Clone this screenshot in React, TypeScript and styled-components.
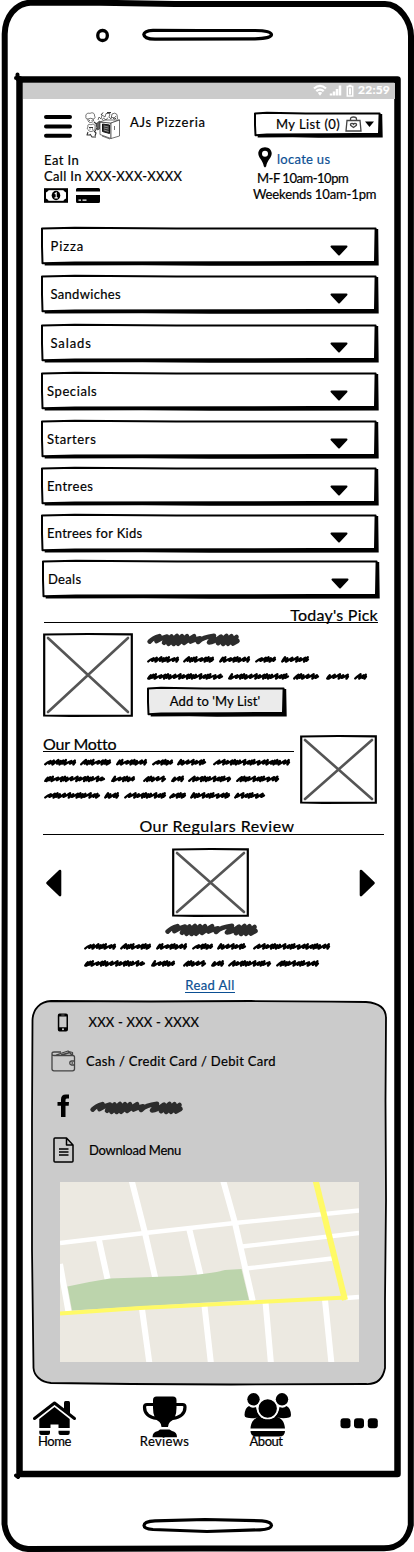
import React from "react";
import styled, { createGlobalStyle } from "styled-components";

const GlobalStyle = createGlobalStyle`
  * { box-sizing: border-box; }
  body { margin: 0; background: #fff; color: #000; font-family: "Lato", sans-serif; -webkit-text-stroke: 0.2px currentColor; }
  svg { display: block; overflow: visible; flex: none; }
`;

/* ---------- device ---------- */

const Phone = styled.div`
  position: relative;
  width: 414px;
  height: 1552px;
  padding: 83px 19px 81px 23px;
  overflow: hidden;
`;

const Bezel = styled.svg`
  position: absolute;
  inset: 0;
  pointer-events: none;
`;

const Screen = styled.div`
  position: relative;
  display: flex;
  flex-direction: column;
  height: 1388px;
`;

const StatusBar = styled.div`
  display: flex;
  align-items: center;
  justify-content: flex-end;
  gap: 4px;
  height: 16px;
  padding: 0 5px 2px 0;
  background: #cbcbcb;
  color: #fff;
`;

/* ---------- text ---------- */

const Label = styled.span<{ $track?: number; $size?: number; $lh?: number }>`
  font-size: ${(p) => p.$size ?? 13}px;
  line-height: ${(p) => p.$lh ?? 16}px;
  letter-spacing: ${(p) => p.$track ?? 0.3}px;
  white-space: nowrap;
`;

const Clock = styled(Label)`
  font-weight: 700;
`;

const Link = styled.a<{ $track?: number }>`
  font-size: 13px;
  line-height: 16px;
  letter-spacing: ${(p) => p.$track ?? 0.3}px;
  color: #0b4f93;
  text-decoration: none;
`;

const Underlined = styled(Link)`
  height: 14px;
  margin-right: 7px;
  line-height: 13px;
  border-bottom: 1px solid #0b4f93;
`;

/* ---------- header ---------- */

const Header = styled.header`
  display: flex;
  justify-content: space-between;
  height: 128px;
  padding: 13px 13px 0 21px;
`;

const Brand = styled.div`
  display: flex;
  flex-direction: column;
`;

const BrandRow = styled.div`
  display: flex;
  height: 40px;
`;

const LogoBox = styled.div`
  margin: 0 10px 0 13px;
`;

const BrandName = styled(Label)`
  margin-top: 2px;
`;

const PayRow = styled.div`
  display: flex;
  gap: 8px;
  margin-top: 4px;
`;

const Info = styled.div`
  display: flex;
  flex-direction: column;
  width: 128px;
`;

const ListButton = styled.button`
  position: relative;
  display: flex;
  align-items: center;
  width: 129px;
  height: 26px;
  padding: 0 0 2px 22px;
  border: 0;
  background: none;
  color: inherit;
  font-family: inherit;
  gap: 5px;
  -webkit-text-stroke: inherit;
`;

const LocateRow = styled.div`
  display: flex;
  gap: 5px;
  height: 23px;
  margin: 9px 0 0 4px;
`;

const LocateLink = styled(Link)`
  margin-top: 4px;
`;

const Hours = styled(Label)<{ $indent?: number }>`
  margin-left: ${(p) => p.$indent ?? 0}px;
`;

/* ---------- menu ---------- */

const Menu = styled.nav`
  display: flex;
  flex-direction: column;
  height: 378px;
  padding-left: 18px;
`;

const MenuRow = styled.button<{ $gap: number; $inset: number; $shift?: number }>`
  position: relative;
  display: flex;
  align-items: center;
  justify-content: space-between;
  flex: none;
  width: 338px;
  height: 39px;
  margin: 0 0 ${(p) => p.$gap}px ${(p) => p.$shift ?? 0}px;
  padding: 0 31px 2px ${(p) => p.$inset}px;
  border: 0;
  background: none;
  color: inherit;
  font-family: inherit;
  text-align: left;
  -webkit-text-stroke: inherit;
`;

const RowCaret = styled.svg`
  position: relative;
  top: 5px;
`;

const Frame = styled.svg`
  position: absolute;
  inset: 0;
  z-index: -1;
`;

/* ---------- sections ---------- */

const Heading = styled.h2<{ $align: string; $track: number }>`
  height: 17px;
  margin: 0;
  padding: 0;
  border-bottom: 1px solid #000;
  font-size: 16px;
  font-weight: 400;
  line-height: 17px;
  letter-spacing: ${(p) => p.$track}px;
  text-align: ${(p) => p.$align};
  white-space: nowrap;
`;

const Pick = styled.section`
  display: flex;
  flex-direction: column;
  height: 130px;
  padding: 1px 17px 0 21px;
`;

const PickBody = styled.div`
  display: flex;
  gap: 14px;
  margin: 10px 0 0 -1px;
`;

const PickText = styled.div`
  display: flex;
  flex-direction: column;
`;

const PickLines = styled.div`
  margin-top: 5px;
`;

const AddButton = styled.button`
  position: relative;
  display: flex;
  align-items: center;
  justify-content: center;
  width: 140px;
  height: 30px;
  padding: 0 4px 3px 0;
  margin-top: 2px;
  border: 0;
  background: none;
  color: inherit;
  font-family: inherit;
  -webkit-text-stroke: inherit;
`;

const Motto = styled.section`
  display: flex;
  gap: 6px;
  height: 82px;
  padding-left: 20px;
`;

const MottoText = styled.div`
  display: flex;
  flex-direction: column;
  width: 251px;
`;

const MottoLines = styled.div`
  margin: 2px 0 0 1px;
`;

const Review = styled.section`
  display: flex;
  flex-direction: column;
  height: 183px;
  padding: 0 11px 0 20px;
`;

const ReviewHeading = styled(Heading)`
  height: 18px;
  padding-left: 7px;
  line-height: 18px;
`;

const Carousel = styled.div`
  display: flex;
  align-items: center;
  justify-content: space-between;
  height: 69px;
  margin: 13px 9px 0 3px;
`;

const ReviewText = styled.div`
  display: flex;
  flex-direction: column;
  align-items: center;
  padding-top: 6px;
`;

const ReviewName = styled.div`
  margin-right: 5px;
`;

const QuoteBox = styled.div`
  align-self: flex-start;
  margin: 2px 0 7px 41px;
`;

/* ---------- contact panel ---------- */

const Panel = styled.section`
  position: relative;
  width: 356px;
  height: 386px;
  margin-left: 8px;
  padding: 3px 0 0 20px;
`;

const ContactRow = styled.div<{ $height: number }>`
  display: flex;
  align-items: center;
  height: ${(p) => p.$height}px;
`;

const IconCell = styled.div<{ $width: number }>`
  display: flex;
  width: ${(p) => p.$width}px;
  padding-right: ${(p) => p.$width - 24}px;
  justify-content: center;
`;

const SocialName = styled.div`
  margin: 4px 0 0 -1px;
`;

const MapBox = styled.div`
  margin: 11px 0 0 9px;
`;

/* ---------- bottom navigation ---------- */

const BottomNav = styled.nav`
  display: flex;
  height: 62px;
  padding: 6px 0 0 9px;
`;

const NavItem = styled.a<{ $width: number; $offset: number }>`
  display: flex;
  flex-direction: column;
  align-items: center;
  width: ${(p) => p.$width}px;
  margin-left: ${(p) => p.$offset}px;
`;

const NavIcon = styled.div`
  height: 42px;
`;

const NavLabel = styled(Label)<{ $nudge?: number }>`
  margin: -1px ${(p) => p.$nudge ?? 0}px 0 0;
`;

const MoreIcon = styled.svg`
  margin: 26px 0 0 49px;
`;

/* ---------- drawings ---------- */

const SketchBox = ({ w, h, fill = "#fff" }: { w: number; h: number; fill?: string }) => (
  <Frame width={w} height={h}>
    <path d={`M3.7 ${h - 5}L${w - 3.5} ${h - 5}L${w - 3.5} 2H${w - 0.8}L${w - 0.3} ${h - 0.6}L${w * 0.5} ${h - 0.2}L${w * 0.3} ${h - 0.7}L3.7 ${h - 0.5}Z`} />
    <path
      d={`M1 1.4L${w * 0.1} 0.8L${w * 0.4} 1.4L${w - 3.4} 1.4L${w - 4} ${h - 4.2}L${w * 0.6} ${h - 3.8}L${w * 0.1} ${h - 3.4}L1.5 ${h - 2.8}L1 ${h * 0.5}Z`}
      fill={fill}
      stroke="#000"
      strokeWidth="2"
      strokeLinejoin="round"
    />
  </Frame>
);

const ImagePlaceholder = ({ w, h }: { w: number; h: number }) => (
  <svg width={w} height={h}>
    <path d={`M1.2 1.5L${w * 0.5} 1L${w - 1.2} 1.3L${w - 1.2} ${h - 1.3}L${w * 0.3} ${h - 1.2}L1.2 ${h - 1.5}Z`} fill="#fff" stroke="#000" strokeWidth="2.2" />
    <path d={`M5 5L${w - 5} ${h - 5}M${w - 5} 5L5 ${h - 5}`} stroke="#555" strokeWidth="2.6" strokeLinecap="round" />
  </svg>
);

type Word = [number, number];

const STEPS = [5.2, 3.2, 4.6, 2.5, 2.4, 2.6, 5.4, 4.1, 2.6, 2.4, 5];

const wordPath = ([from, to]: Word, y: number, seed: number) => {
  let x = from + 1.2;
  let i = seed;
  let d = `M${x} ${y + 2}`;
  while (x < to - 3) {
    const s = STEPS[i % STEPS.length];
    const next = Math.min(x + s, to - 1.4);
    const top = y - 1.3 - (i % 3) * 0.5;
    const low = y + 1.4 + (i % 2) * 0.8;
    d += `Q${(x + s * 0.4).toFixed(1)} ${y.toFixed(1)} ${(next + 0.2).toFixed(1)} ${top.toFixed(1)}L${(next - 1.2).toFixed(1)} ${low.toFixed(1)}`;
    x = next;
    i += 1;
  }
  return `${d}L${to - 1} ${y}`;
};

const ScribbleLines = ({ lines, width, pitch }: { lines: Word[][]; width: number; pitch: number }) => (
  <svg width={width} height={pitch * lines.length}>
    <g fill="none" stroke="#000" strokeWidth="2.3" strokeLinecap="round" strokeLinejoin="round">
      {lines.map((words, row) => words.map((word, i) => <path key={`${row}-${i}`} d={wordPath(word, row * pitch + pitch / 2, row * 3 + i * 2)} />))}
    </g>
  </svg>
);

const ScribbleTitle = () => (
  <svg width="93" height="13" viewBox="0 0 93 13">
    <path
      d="M2.6 8.6Q6 5 12.500 3.200L9.500 8.200Q14 5 20 3.600L17 9.800L24.500 3.400L21.500 10.800L30 3L26.500 11L35 3.200L31 10.800L40 3.200L37 10Q42 6 47 3.200L43.500 8.600Q48 6 53 5.200L51 9Q56 4 67 2.800L62 9.500Q67 9 74 3.600L71 10.200L79.500 3L76 11L84.500 3.200L81 10.800L89.500 4L86 10.600L90.500 8"
      fill="none"
      stroke="#2c2c2c"
      strokeWidth="4.6"
      strokeLinecap="round"
      strokeLinejoin="round"
    />
  </svg>
);

const Arrow = ({ flip }: { flip?: boolean }) => (
  <svg width="16" height="28" viewBox="0 0 16 28">
    <path d={flip ? "M2 2L14.500 14L2 26Z" : "M14 2L1.500 14L14 26Z"} stroke="#000" strokeWidth="2.6" strokeLinejoin="round" />
  </svg>
);

const PizzeriaLogo = () => (
  <svg width="35" height="27" viewBox="0 0 35 27" fill="none" stroke="#333" strokeWidth="0.700" strokeLinejoin="round">
    <path d="M1 5C0 2 3 0.500 5 1.500C7 0 10 1 9.500 4C11 6 9 7 8 7L8.500 9C7 11 4 11 3 9L3 7C1 7 0.500 6 1 5Z" />
    <path d="M3 7Q6 5.500 8 7M4 8.500H5M6.500 8.500H7.500" />
    <path d="M3 15C2 12 5 12 6 13C8 11 11 13 10 15C11 17 9 17.500 8.500 18C8 20 4 20 3.500 18C2 17 2 16 3 15Z" />
    <path d="M4 15.500H8M4.500 17H5.500M7 17H8M3 20L2 23H5M9 19L11 21L10 24M5 22L7 25H11M9 10L14 14M11 11L13 17M12 16L10 19" strokeWidth="1.1" />
    <path d="M11 12L14.500 9V17L12.500 18Z" fill="#666" />
    <path d="M15 10L26 11V26.500L15 22.500Z" fill="#fff" />
    <path d="M15 10L20 8H34.500L26 11Z" fill="#fff" />
    <path d="M26 11L34.500 8V24L26 26.500Z" fill="#fff" />
    <path d="M17.500 12L24.500 13V21.500L17.500 19.500Z" fill="#333" stroke="#111" strokeWidth="1" />
    <path d="M19 14L23.500 15M19 16L23.500 17M19 18L23.500 19.500" stroke="#ccc" strokeWidth="0.600" />
    <path d="M13 8L14 5L16 7L17 3L20 5L21 1.500H25L24 5L26 7L27 2Q30 0 32 2.500L32.500 7M17 8L18.500 6L21 8L23 5.500M26 5L29 6L31 4" />
    <path d="M16 3L18 0.500M22 0.500H26M28 6Q30 8 31 6" strokeWidth="1" />
    <path d="M29.500 14V18M17 24L25 27" />
  </svg>
);

const CashIcon = () => (
  <svg width="24" height="15" viewBox="0 0 24 15">
    <rect x="1" y="1.200" width="22" height="12.600" fill="#fff" stroke="#000" strokeWidth="2" />
    <path d="M1 1H5Q4.500 4 2 4.500H1ZM23 1H19Q19.500 4 22 4.500H23ZM1 14H5Q4.500 11 2 10.500H1ZM23 14H19Q19.500 11 22 10.500H23Z" />
    <ellipse cx="12" cy="7.500" rx="4.300" ry="4.700" />
    <path d="M10.700 6L12.200 4.800V9.500M10.500 9.900H13.800" stroke="#fff" strokeWidth="1.100" fill="none" />
  </svg>
);

const CardIcon = () => (
  <svg width="24" height="15" viewBox="0 0 24 15">
    <path d="M1.500 0H22.500Q24 0 24 1.500V3.600H0V1.500Q0 0 1.500 0ZM0 7H24V13.500Q24 15 22.500 15H1.500Q0 15 0 13.500Z" />
    <path d="M2.500 12.200H5M6.500 12.200H10.500" stroke="#fff" strokeWidth="1.200" />
  </svg>
);

const BagIcon = () => (
  <svg width="17" height="16" viewBox="0 0 17 16" fill="none" stroke="#444" strokeWidth="1.300">
    <path d="M2 4.500H15L16 15H1Z" />
    <path d="M5.500 4.500V3Q5.500 1 8.500 1Q11.500 1 11.500 3V4.500" />
    <path d="M8.500 11.500L5.600 9.300Q5 7.300 7 7.300Q8 7.400 8.500 8.200Q9 7.400 10 7.300Q12 7.300 11.400 9.300Z" />
  </svg>
);

const PinIcon = () => (
  <svg width="14" height="21" viewBox="0 0 14 21">
    <path fillRule="evenodd" d="M7 0.200C3 0.200 0.300 3 0.300 6.600C0.300 11 5 13.500 5.800 19.300Q7 21.500 8.200 19.300C9 13.500 13.700 11 13.700 6.600C13.700 3 11 0.200 7 0.200ZM7 3.700A3 3 0 1 1 7 9.700A3 3 0 1 1 7 3.700Z" />
  </svg>
);

const HomeIcon = () => (
  <svg width="43" height="36" viewBox="0 0 43 36">
    <path d="M31 2.500Q31 1 32.500 1H35.500Q37 1 37 2.500V14L31 9Z" />
    <path d="M1.500 18.500L21.500 3L41.500 18.500" fill="none" stroke="#000" strokeWidth="3" strokeLinecap="round" strokeLinejoin="round" />
    <path d="M6.300 19L21.500 7L36.700 19V28H25.500V24.500H17.500V28H6.300ZM6.300 30.800H17V33Q17 35 15 35H8.300Q6.300 35 6.300 33ZM25.500 30.800H36.700V33Q36.700 35 34.700 35H27.500Q25.500 35 25.500 33Z" />
  </svg>
);

const TrophyIcon = () => (
  <svg width="46" height="42" viewBox="0 0 46 42">
    <path d="M11 4Q11 0.500 14.500 0.500H31Q34.500 0.500 34.500 4V12Q34.500 23 28 26Q26 28 26 31H19.500Q19.500 28 17.500 26Q11 23 11 12Z" />
    <path d="M12 8.500H5Q2.500 8.500 2.500 11C2.500 18 8 21.500 15 22.500M33.500 8.500H40.500Q43 8.500 43 11C43 18 37.500 21.500 30.500 22.500" fill="none" stroke="#000" strokeWidth="3.200" />
    <path d="M10.500 41.200Q10.500 36 16 35L18 33.500H27.500L30 35Q35 36 35 41.200Z" />
  </svg>
);

const PeopleIcon = () => (
  <svg width="47" height="44" viewBox="0 0 47 44">
    <g transform="translate(0 1)">
      <circle cx="9.500" cy="6.300" r="6.200" />
      <circle cx="38" cy="6.300" r="6.200" />
      <path d="M0.500 22Q1 14.500 5 13Q8 16 12 14Q13 21 17.500 24Q8 26 2.500 24.500Q0.500 24 0.500 22ZM47 22Q46.500 14.500 42.500 13Q39.500 16 35.500 14Q34.500 21 30 24Q39 26 45 24.500Q47 24 47 22Z" />
      <path d="M6.500 35.500C7 28 11 25 15.500 23.500Q23.500 28.500 32 23.500C37 25 40.500 28 41 35.500ZM6.500 38H41Q41 43.500 35 43.500H12.500Q6.500 43.500 6.500 38Z" />
      <circle cx="23.700" cy="15.500" r="10" stroke="#fff" strokeWidth="1.600" />
    </g>
  </svg>
);

const SmartphoneIcon = () => (
  <svg width="12" height="19" viewBox="0 0 12 19">
    <path fillRule="evenodd" d="M2.500 0.500H9Q11 0.500 11 2.500V16.500Q11 18.500 9 18.500H2.500Q0.800 18.500 0.800 16.500V2.500Q0.800 0.500 2.500 0.500ZM2.300 3.500V14.200H9.500V3.500ZM4.300 1.700V2.300H7.500V1.700ZM6 15.200A1 1 0 1 0 6 17.300A1 1 0 1 0 6 15.200Z" />
  </svg>
);

const WalletIcon = () => (
  <svg width="25" height="22" viewBox="0 0 25 22" fill="none" stroke="#444" strokeWidth="1.300" strokeLinejoin="round">
    <path d="M22.500 5.500H3Q1 5.500 1 3.500M1 3.500V19Q1 20.800 3 20.800H21.500Q23.500 20.800 23.500 19V7Q23.500 5.500 22 5.500M1 3.500Q1 2 3 2H10M5 5L17 1L21 5M10 5L19 2.500M18 1.500L21.500 2.500V5" />
    <path d="M23.500 11H20.500Q18.700 11.200 18.700 13Q18.700 14.800 20.500 15H23.500M20.500 13H22" />
  </svg>
);

const FacebookIcon = () => (
  <svg width="13" height="23" viewBox="0 0 13 23">
    <path d="M12 0.500V4.500H9.800Q8.500 4.500 8.500 6V8H12L11.700 11.800H8.500V23H4V11.800H0.500V8H4V5.500Q4 0.500 8.800 0.500Z" />
  </svg>
);

const DocumentIcon = () => (
  <svg width="21" height="26" viewBox="0 0 21 26" fill="none" stroke="#000" strokeWidth="1.500" strokeLinejoin="round">
    <path d="M1 2Q1 1 2 1H13.500L20 8V24Q20 25 19 25H2Q1 25 1 24ZM13.500 1V8H20" />
    <path d="M6 12H15.500M6 15H15.500M6 18H15.500" strokeWidth="1.300" />
  </svg>
);

const StreetMap = () => (
  <svg width="299" height="180" viewBox="0 0 299 180" style={{ overflow: "hidden" }}>
    <rect width="299" height="180" fill="#ece9e1" />
    <g fill="none" stroke="#fff" strokeWidth="4.300">
      <path d="M0 61L85 51L175 41L299 28.500M182 64.500L299 51M186 86.500L272 76.500M286 116L299 115" />
    </g>
    <g fill="none" stroke="#fff" strokeWidth="6">
      <path d="M71.500 -2L85 51L95.500 97M163 -2L175 41L193 120M38.500 56L48 99M129 46L141 95M0 82L8.500 130M82 127L89.500 182M144.500 124L151 182M205.500 120L211 182M265 118L271.500 182" />
    </g>
    <path d="M7.500 104.500Q30 99.500 50 96.500L120 94Q150 92 165 88L181.500 87L189 118L12 128.500Z" fill="#bcd4ac" />
    <path d="M0 131.500L80 126L189 120.500L286 115.500" fill="none" stroke="#fffa66" strokeWidth="4" />
    <path d="M255.500 -2L285 118" fill="none" stroke="#fffa66" strokeWidth="6" />
  </svg>
);

const DeviceOutline = () => (
  <Bezel width="414" height="1552">
    <g fill="none" stroke="#000" strokeLinejoin="round">
      <path d="M32 2.500L100 2.700L175 4H385C400 4 411 22 411 36L410.700 500L411 1000L410.800 1525C408 1540 398 1548 384 1548.300L200 1548.500L28 1549C14 1548 6 1537 4.500 1524L4.500 1000L5.200 500L4.700 34C5 17 15 3 32 2.500Z" strokeWidth="6" />
      <path d="M19.500 79.500H397.500V1474H19.500Z" strokeWidth="6.500" />
      <path d="M17.500 74.500V79M16 78H20M16 1475.500L18 1477" strokeWidth="4" strokeLinecap="round" />
      <rect x="97.800" y="30.500" width="9.500" height="10" rx="4.500" strokeWidth="3.300" />
      <path d="M153 30.300L200 30.500H255C265 30.500 271 32 271.500 34.500C271.500 37 265 38.800 255 38.800L155 39.200C147 39 144 37 143.800 34.500C144 32 148 30.600 153 30.300Z" strokeWidth="3.200" />
      <path d="M155 1520.800L205 1519.500L262 1520.800C269 1521.500 271.500 1523 271.500 1525.500C271 1528.500 267 1529.500 260 1529.800L207 1531.500L153 1529.500C147 1529 144 1528 144 1525.500C144 1523 148 1521 155 1520.800Z" strokeWidth="3.200" />
    </g>
  </Bezel>
);

const PanelFrame = () => (
  <Frame width="356" height="386">
    <path d="M20 1L120 1.500L220 1L300 1.700L335 2C348 3 355 8 355 18L354.500 100L355 200L354 300L354 368C352 379 345 384.500 335 384L200 384.500L100 384L20 383C9 382 3 375 2.500 368L1 250V120L1.500 20C2 9 9 1.500 20 1Z" fill="#cbcbcb" stroke="#000" strokeWidth="1.800" />
  </Frame>
);

const StatusIcons = () => (
  <svg width="41" height="13" viewBox="0 0 41 13" fill="none" stroke="#fff">
    <path d="M1 4.500Q7 -0.800 13 4.500M3.300 7.200Q7 4 10.700 7.200" strokeWidth="2.300" />
    <path d="M4.800 8.800Q7 7 9.200 8.800L7 11.700Z" fill="#fff" stroke="none" />
    <path d="M18 11.500V9.500M21 11.500V7.500M24 11.500V5M27 11.500V1.500" strokeWidth="2.500" />
    <path d="M34.300 2.500H39.700V12H34.300ZM35.500 1.500H38.500" strokeWidth="1.500" />
    <path d="M36 4.300H38V10.500H36Z" fill="#fff" stroke="none" />
  </svg>
);

/* ---------- data ---------- */

const MENU = [
  { name: "Pizza", inset: 9.5, gap: 9, track: 0.9 },
  { name: "Sandwiches", inset: 9.5, gap: 10, track: 0.31 },
  { name: "Salads", inset: 9.5, gap: 9, track: 0.9 },
  { name: "Specials", inset: 6, gap: 9, track: 0.6 },
  { name: "Starters", inset: 6, gap: 8, track: 0.62 },
  { name: "Entrees", inset: 6, gap: 8, track: 0.48 },
  { name: "Entrees for Kids", inset: 6, gap: 7, track: 0.32 },
  { name: "Deals", inset: 6, gap: 0, track: 0.3, shift: 1 },
];

const LINE_A: Word[] = [[0, 32], [36, 67], [72, 103], [108, 129], [133, 162], [169, 246]];
const LINE_B: Word[] = [[0, 61], [67, 91], [99, 122], [127, 140], [144, 187], [192, 235]];
const LINE_C: Word[] = [[0, 56], [60, 75], [80, 122], [125, 142], [146, 186], [190, 221]];
const PICK_LINES: Word[][] = [
  [[0, 32], [36, 67], [72, 103], [108, 129], [134, 162]],
  [[0, 76], [81, 142], [146, 172], [179, 202], [207, 220]],
];

export default function App() {
  return (
    <Phone>
      <GlobalStyle />
      <DeviceOutline />
      <Screen>
        <StatusBar>
          <StatusIcons />
          <Clock $size={12} $track={0.2} $lh={14}>22:59</Clock>
        </StatusBar>

        <Header>
          <Brand>
            <BrandRow>
              <svg width="28" height="27" viewBox="0 0 28 27">
                <path d="M2 5H26M2 14.500H26M2 23.700H26" stroke="#000" strokeWidth="4" strokeLinecap="round" />
              </svg>
              <LogoBox><PizzeriaLogo /></LogoBox>
              <BrandName $track={0.76}>AJs Pizzeria</BrandName>
            </BrandRow>
            <Label $track={0.45}>Eat In</Label>
            <Label $track={0.34}>Call In XXX-XXX-XXXX</Label>
            <PayRow>
              <CashIcon />
              <CardIcon />
            </PayRow>
          </Brand>
          <Info>
            <ListButton>
              <SketchBox w={129} h={26} />
              <Label $track={0.42}>My List (0)</Label>
              <BagIcon />
              <svg width="9" height="6" viewBox="0 0 9 6" style={{ marginLeft: -2 }}>
                <path d="M0 0.500H9L4.500 6Z" />
              </svg>
            </ListButton>
            <LocateRow>
              <PinIcon />
              <LocateLink $track={0.29}>locate us</LocateLink>
            </LocateRow>
            <Hours $indent={3} $track={-0.48}>M-F 10am-10pm</Hours>
            <Hours $indent={-1} $track={-0.13}>Weekends 10am-1pm</Hours>
          </Info>
        </Header>

        <Menu>
          {MENU.map((m) => (
            <MenuRow key={m.name} $gap={m.gap} $inset={m.inset} $shift={m.shift}>
              <SketchBox w={338} h={39} />
              <Label $track={m.track}>{m.name}</Label>
              <RowCaret width="18" height="11" viewBox="0 0 18 11">
                <path d="M1.500 1.500H16.500L9 9.500Z" stroke="#000" strokeWidth="2" strokeLinejoin="round" />
              </RowCaret>
            </MenuRow>
          ))}
        </Menu>

        <Pick>
          <Heading $align="right" $track={0.24}>Today's Pick</Heading>
          <PickBody>
            <ImagePlaceholder w={90} h={84} />
            <PickText>
              <ScribbleTitle />
              <PickLines><ScribbleLines lines={PICK_LINES} width={220} pitch={17} /></PickLines>
              <AddButton>
                <SketchBox w={140} h={30} fill="#ebebeb" />
                <Label $track={0.1}>Add to 'My List'</Label>
              </AddButton>
            </PickText>
          </PickBody>
        </Pick>

        <Motto>
          <MottoText>
            <Heading $align="left" $track={-0.2}>Our Motto</Heading>
            <MottoLines><ScribbleLines lines={[LINE_A, LINE_B, LINE_C]} width={246} pitch={16.6} /></MottoLines>
          </MottoText>
          <ImagePlaceholder w={77} h={69} />
        </Motto>

        <Review>
          <ReviewHeading $align="center" $track={0.5}>Our Regulars Review</ReviewHeading>
          <Carousel>
            <Arrow />
            <ImagePlaceholder w={77} h={69} />
            <Arrow flip />
          </Carousel>
          <ReviewText>
            <ReviewName><ScribbleTitle /></ReviewName>
            <QuoteBox>
              <ScribbleLines lines={[LINE_A, LINE_B]} width={246} pitch={17} />
            </QuoteBox>
            <Underlined $track={0.42}>Read All</Underlined>
          </ReviewText>
        </Review>

        <Panel>
          <PanelFrame />
          <ContactRow $height={38}>
            <IconCell $width={37.5}><SmartphoneIcon /></IconCell>
            <Label $track={0.21}>XXX - XXX - XXXX</Label>
          </ContactRow>
          <ContactRow $height={40}>
            <IconCell $width={35}><WalletIcon /></IconCell>
            <Label $track={0.31}>Cash / Credit Card / Debit Card</Label>
          </ContactRow>
          <ContactRow $height={48}>
            <IconCell $width={40}><FacebookIcon /></IconCell>
            <SocialName><ScribbleTitle /></SocialName>
          </ContactRow>
          <ContactRow $height={42}>
            <IconCell $width={38}><DocumentIcon /></IconCell>
            <Label $track={-0.25}>Download Menu</Label>
          </ContactRow>
          <MapBox><StreetMap /></MapBox>
        </Panel>

        <BottomNav>
          <NavItem $width={45} $offset={0}>
            <NavIcon><svg width="43" height="42"><g transform="translate(0 8)"><HomeIcon /></g></svg></NavIcon>
            <NavLabel $track={-0.45}>Home</NavLabel>
          </NavItem>
          <NavItem $width={50} $offset={62.5}>
            <NavIcon><svg width="46" height="42"><g transform="translate(0 4)"><TrophyIcon /></g></svg></NavIcon>
            <NavLabel $track={0.36}>Reviews</NavLabel>
          </NavItem>
          <NavItem $width={47} $offset={54.5}>
            <NavIcon><PeopleIcon /></NavIcon>
            <NavLabel $track={-0.5} $nudge={3}>About</NavLabel>
          </NavItem>
          <MoreIcon width="39" height="11" viewBox="0 0 39 11">
            <rect x="0.500" y="0.300" width="10" height="10" rx="3" />
            <rect x="14" y="0.300" width="10" height="10" rx="3" />
            <rect x="27.800" y="0.300" width="10" height="10" rx="3" />
          </MoreIcon>
        </BottomNav>
      </Screen>
    </Phone>
  );
}
